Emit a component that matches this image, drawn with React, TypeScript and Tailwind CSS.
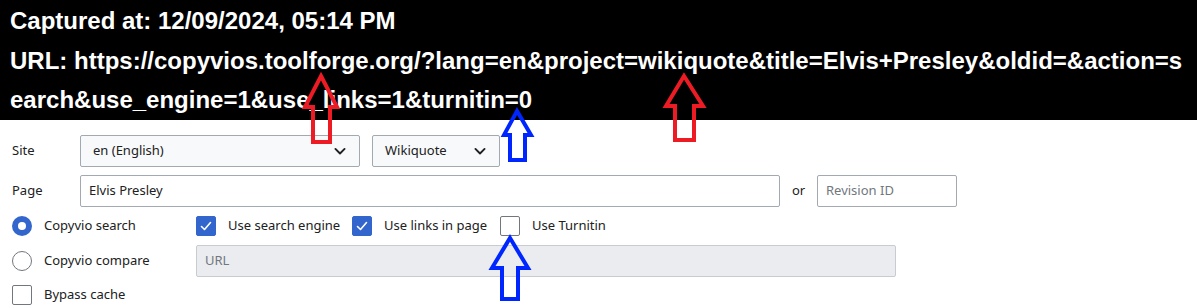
import React from "react";

const Chevron = () => (
  <svg width="20" height="20" viewBox="0 0 24 24" fill="none" stroke="#202122" strokeWidth="2.3" strokeLinecap="round" strokeLinejoin="round">
    <path d="m6.5 9.5 5.5 5.5 5.5-5.5" />
  </svg>
);

const CheckBox = ({ checked }: { checked: boolean }) =>
  checked ? (
    <div className="w-[20px] h-[20px] rounded-[2px] bg-[#3366cc] border border-[#3366cc] flex items-center justify-center shrink-0">
      <svg width="14" height="14" viewBox="0 0 14 14" fill="none" stroke="#ffffff" strokeWidth="1.6" strokeLinecap="round" strokeLinejoin="round">
        <path d="M2.5 7.5 5.5 10.5 11.5 3.5" />
      </svg>
    </div>
  ) : (
    <div className="w-[20px] h-[20px] rounded-[2px] bg-white border border-[#72777d] shrink-0" />
  );

const Radio = ({ checked }: { checked: boolean }) =>
  checked ? (
    <div className="w-[20px] h-[20px] rounded-full bg-[#3366cc] flex items-center justify-center shrink-0">
      <div className="w-[8px] h-[8px] rounded-full bg-white" />
    </div>
  ) : (
    <div className="w-[20px] h-[20px] rounded-full bg-white border border-[#72777d] shrink-0" />
  );

const arrows: { pts: string; color: string }[] = [
  { pts: "321,76 337,107 330,107 330,142 313,142 313,107 305,107", color: "#ed1c24" },
  { pts: "684,76 703,106 694,106 694,140 675,140 675,106 666,106", color: "#ed1c24" },
  { pts: "517,111 531,135 525,135 525,160 510,160 510,135 504,135", color: "#0026ff" },
  { pts: "510,238 528,268 518,268 518,299 502,299 502,268 492,268", color: "#0026ff" },
];

export default function App() {
  return (
    <div className="relative w-[1197px] h-[307px] overflow-hidden bg-white">
      <div
        className="bg-black text-white font-bold text-[24px] leading-[39.5px] px-[10px] pt-[1px] h-[120px] break-all"
        style={{ fontFamily: '"Liberation Sans", Arial, sans-serif' }}
      >
        <div>Captured at: 12/09/2024, 05:14 PM</div>
        <div>
          URL: https://copyvios.toolforge.org/?lang=en&amp;project=wikiquote&amp;title=Elvis+Presley&amp;oldid=&amp;action=search&amp;use_engine=1&amp;use_links=1&amp;turnitin=0
        </div>
      </div>

      <div
        className="px-[12px] text-[13px] text-[#202122]"
        style={{ fontFamily: '"Noto Sans", "Open Sans", sans-serif' }}
      >
        {/* Site row */}
        <div className="flex items-center mt-[15px] h-[32px]">
          <div className="w-[68px]">Site</div>
          <div className="w-[280px] h-[32px] bg-[#f8f9fa] border border-[#a2a9b1] rounded-[2px] flex items-center justify-between pl-[12px] pr-[9px]">
            <span>en (English)</span>
            <Chevron />
          </div>
          <div className="ml-[12px] w-[128px] h-[32px] bg-[#f8f9fa] border border-[#a2a9b1] rounded-[2px] flex items-center justify-between pl-[12px] pr-[9px]">
            <span>Wikiquote</span>
            <Chevron />
          </div>
        </div>

        {/* Page row */}
        <div className="flex items-center mt-[8px] h-[32px]">
          <div className="w-[68px]">Page</div>
          <div className="w-[700px] h-[32px] bg-white border border-[#a2a9b1] rounded-[2px] flex items-center px-[8px]">
            Elvis Presley
          </div>
          <div className="w-[37px] pl-[12px]">or</div>
          <div className="w-[140px] h-[32px] bg-white border border-[#a2a9b1] rounded-[2px] flex items-center px-[8px] text-[#72777d]">
            Revision ID
          </div>
        </div>

        {/* Copyvio search row */}
        <div className="flex items-center h-[38px]">
          <div className="w-[184px] flex items-center">
            <Radio checked />
            <span className="ml-[12px]">Copyvio search</span>
          </div>
          <div className="w-[156px] flex items-center">
            <CheckBox checked />
            <span className="ml-[12px]">Use search engine</span>
          </div>
          <div className="w-[148px] flex items-center">
            <CheckBox checked />
            <span className="ml-[12px]">Use links in page</span>
          </div>
          <div className="flex items-center">
            <CheckBox checked={false} />
            <span className="ml-[12px]">Use Turnitin</span>
          </div>
        </div>

        {/* Copyvio compare row */}
        <div className="flex items-center h-[32px]">
          <div className="w-[184px] flex items-center">
            <Radio checked={false} />
            <span className="ml-[12px]">Copyvio compare</span>
          </div>
          <div className="w-[700px] h-[32px] bg-[#eaecf0] border border-[#c8ccd1] rounded-[2px] flex items-center px-[8px] text-[#72777d]">
            URL
          </div>
        </div>

        {/* Bypass cache */}
        <div className="flex items-center mt-[8px] h-[20px]">
          <CheckBox checked={false} />
          <span className="ml-[12px]">Bypass cache</span>
        </div>
      </div>

      <svg className="absolute left-0 top-0 pointer-events-none" width="1197" height="307" viewBox="0 0 1197 307">
        {arrows.map((a, i) => (
          <polygon key={i} points={a.pts} fill="none" stroke={a.color} strokeWidth="4" strokeLinejoin="miter" />
        ))}
      </svg>
    </div>
  );
}
